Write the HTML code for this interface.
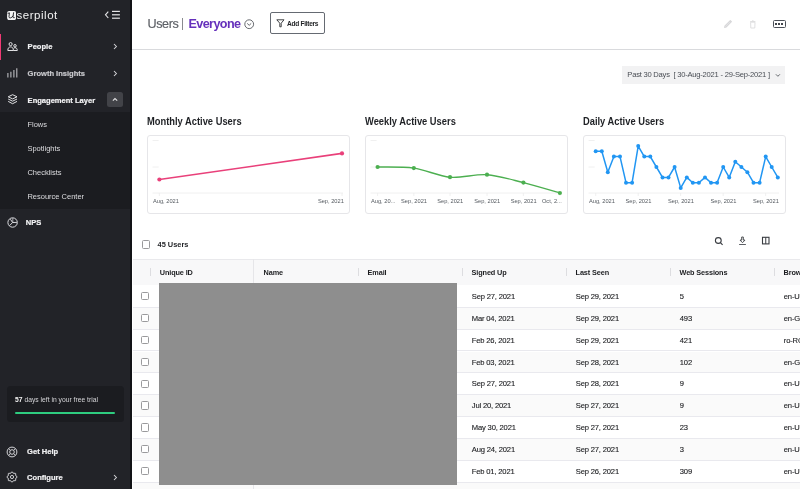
<!DOCTYPE html>
<html><head><meta charset="utf-8">
<style>
*{box-sizing:border-box;margin:0;padding:0}
html,body{width:800px;height:489px;overflow:hidden;background:#fff;font-family:"Liberation Sans",sans-serif;-webkit-font-smoothing:antialiased}
#root{position:absolute;left:0;top:0;width:800px;height:489px;overflow:hidden;will-change:transform;background:#fff}
.abs{position:absolute}
#side{position:absolute;left:0;top:0;width:132.2px;height:489px;background:#222328;border-right:2.2px solid #121316}
.nt{position:absolute;left:27.6px;font-size:7.55px;font-weight:bold;line-height:10px;color:#f2f2f4;white-space:nowrap;-webkit-text-stroke:0.2px currentColor}
.st{position:absolute;left:27.4px;font-size:7.5px;line-height:10px;color:#dcdcdf;white-space:nowrap}
.card{position:absolute;top:135px;width:203px;height:78.5px;border:1px solid #e6e6e9;border-radius:3px;background:#fff}
.card svg{position:absolute;left:-1px;top:-1px}
.lbl{position:absolute;top:60.8px;font-size:5.7px;line-height:8px;color:#555a60;white-space:nowrap}
.lbl.c{width:60px;text-align:center}
.ct{position:absolute;top:116.3px;font-size:10.1px;font-weight:bold;line-height:12px;transform:scaleX(0.925);transform-origin:0 0;color:#1e2024;white-space:nowrap}
.row{position:absolute;left:133px;width:667px;height:21.8px;border-bottom:1px solid #e9e9ee}
.cb{position:absolute;top:6.3px;width:8.2px;height:8.2px;border:1px solid #9a9a9c;border-radius:1.5px;background:#fff}
.cell{position:absolute;top:6.2px;font-size:7.6px;line-height:10px;color:#1c1d20;letter-spacing:-0.17px;-webkit-text-stroke:0.12px currentColor;white-space:nowrap}
.th{position:absolute;top:267.8px;font-size:7.3px;font-weight:bold;line-height:10px;color:#1c1d20;letter-spacing:-0.12px;white-space:nowrap}
.sep{position:absolute;top:268px;width:1px;height:8px;background:#dddde0}
</style></head>
<body>
<div id="root">
<div id="side">
  <svg class="abs" style="left:7px;top:10.8px" width="9.2" height="9.2" viewBox="0 0 9.2 9.2"><rect x="0.1" y="0.1" width="9" height="9" rx="2" fill="#f4f4f4"/><path d="M1,2.4 L2.4,1.8 L2,5.8 Q1.9,7.1 3.4,6.9 Q5,6.6 6.2,4.9 M6.6,1.7 L5.9,6 Q5.8,7 7.3,6.7" fill="none" stroke="#222328" stroke-width="0.95" stroke-linecap="round" stroke-linejoin="round"/></svg>
  <div class="abs" style="left:16.4px;top:7.5px;font-size:11.5px;line-height:14px;color:#f4f4f4;letter-spacing:0.55px">serpilot</div>
  <svg class="abs" style="left:104px;top:10px" width="17" height="10" viewBox="0 0 17 10"><path d="M4.3,1.6 L1.5,4.8 L4.3,8" fill="none" stroke="#e6e6e8" stroke-width="1.1"/><g stroke="#e6e6e8" stroke-width="1.2"><line x1="8" y1="1.4" x2="15.9" y2="1.4"/><line x1="8" y1="4.8" x2="15.9" y2="4.8"/><line x1="8" y1="8.2" x2="15.9" y2="8.2"/></g></svg>

  <div class="abs" style="left:0;top:33.5px;width:1.1px;height:26px;background:#f03a74"></div>
  <svg class="abs" style="left:6.5px;top:41.5px" width="11" height="10" viewBox="0 0 11 10"><g fill="none" stroke="#ececee" stroke-width="0.95" stroke-linejoin="round"><circle cx="3.6" cy="2.1" r="1.55"/><path d="M0.8,8.5 C0.8,6 2,4.9 3.6,4.9 C5.2,4.9 6.4,6 6.4,8.5 Z"/><circle cx="8" cy="3.8" r="1.25"/><path d="M6.4,8.5 L10.3,8.5 C10.3,6.6 9.4,5.7 8,5.7 C7.4,5.7 7,5.9 6.7,6.2"/></g></svg>
  <div class="nt" style="top:42px">People</div>
  <svg class="abs" style="left:113px;top:43.2px" width="5" height="7" viewBox="0 0 5 7"><path d="M1,1 L3.4,3.5 L1,6" fill="none" stroke="#d6d6d9" stroke-width="1.05"/></svg>

  <svg class="abs" style="left:7px;top:68px" width="11" height="10" viewBox="0 0 11 10"><g stroke="#bdbdc1" stroke-width="1.1"><line x1="0.9" y1="5" x2="0.9" y2="9.6"/><line x1="3.9" y1="3.8" x2="3.9" y2="9.6"/><line x1="6.9" y1="2" x2="6.9" y2="9.6"/><line x1="9.8" y1="0.2" x2="9.8" y2="9.6"/></g></svg>
  <div class="nt" style="top:68.5px;color:#c9c9cd">Growth Insights</div>
  <svg class="abs" style="left:113px;top:69.5px" width="5" height="7" viewBox="0 0 5 7"><path d="M1,1 L3.4,3.5 L1,6" fill="none" stroke="#d6d6d9" stroke-width="1.05"/></svg>

  <svg class="abs" style="left:7px;top:94px" width="11" height="12" viewBox="0 0 11 12"><g fill="none" stroke="#ececee" stroke-width="0.95" stroke-linejoin="round"><path d="M5.6,0.7 L10,2.8 L5.6,4.9 L1.2,2.8 Z"/><path d="M1.2,5 L5.6,7.2 L10,5"/><path d="M1.2,7.4 L5.6,9.7 L10,7.4"/></g></svg>
  <div class="nt" style="top:95.5px">Engagement Layer</div>
  <div class="abs" style="left:106.9px;top:91.6px;width:15.7px;height:15.3px;background:#424348;border-radius:2.5px"></div>
  <svg class="abs" style="left:112px;top:96px" width="7" height="6" viewBox="0 0 7 6"><path d="M0.9,4.6 L3,2.6 L5.2,4.6" fill="none" stroke="#e0e0e2" stroke-width="1.2"/></svg>

  <div class="abs" style="left:0;top:112.4px;width:130px;height:96.2px;background:#1b1c20"></div>
  <div class="st" style="top:120.2px">Flows</div>
  <div class="st" style="top:143.7px">Spotlights</div>
  <div class="st" style="top:167.7px">Checklists</div>
  <div class="st" style="top:191.7px">Resource Center</div>

  <svg class="abs" style="left:7px;top:217.4px" width="11" height="11" viewBox="0 0 11 11"><g fill="none" stroke="#e4e4e8" stroke-width="0.95"><circle cx="5.6" cy="5.5" r="4.7"/><path d="M3.4,2.2 L5.6,5.5 L9.9,5.4 M5.6,5.5 L2.6,8.6"/><path d="M5.8,1 L5.8,5.3" stroke-width="0.7"/></g></svg>
  <div class="nt" style="top:218px;left:25.8px">NPS</div>

  <div class="abs" style="left:6.7px;top:385.6px;width:117px;height:36.3px;background:#1b1c20;border-radius:3.5px"></div>
  <div class="abs" style="left:15px;top:395.4px;font-size:6.75px;line-height:9px;color:#d4d4d7;white-space:nowrap"><b style="color:#f4f4f4">57</b> days left in your free trial</div>
  <div class="abs" style="left:15px;top:411.9px;width:100.4px;height:2.2px;background:#2ecc7f;border-radius:1px"></div>

  <svg class="abs" style="left:6px;top:445.5px" width="12" height="12" viewBox="0 0 12 12"><g fill="none" stroke="#dcdce0" stroke-width="0.95"><circle cx="6" cy="6" r="4.9"/><circle cx="6" cy="6" r="2.3"/><path d="M2.6,2.6 L4.3,4.3 M9.4,2.6 L7.7,4.3 M2.6,9.4 L4.3,7.7 M9.4,9.4 L7.7,7.7" stroke-width="0.8"/></g></svg>
  <div class="nt" style="top:446.5px;left:27.1px">Get Help</div>

  <svg class="abs" style="left:6px;top:471.3px" width="12" height="12" viewBox="0 0 12 12"><g fill="none" stroke="#dcdce0" stroke-width="0.9" stroke-linejoin="round"><path d="M5.51,1.02 L6.49,1.02 L7.16,2.17 L7.89,2.47 L9.17,2.13 L9.87,2.83 L9.53,4.11 L9.83,4.84 L10.98,5.51 L10.98,6.49 L9.83,7.16 L9.53,7.89 L9.87,9.17 L9.17,9.87 L7.89,9.53 L7.16,9.83 L6.49,10.98 L5.51,10.98 L4.84,9.83 L4.11,9.53 L2.83,9.87 L2.13,9.17 L2.47,7.89 L2.17,7.16 L1.02,6.49 L1.02,5.51 L2.17,4.84 L2.47,4.11 L2.13,2.83 L2.83,2.13 L4.11,2.47 L4.84,2.17 Z"/><circle cx="6" cy="6" r="1.6"/></g></svg>
  <div class="nt" style="top:472.5px;left:27.1px">Configure</div>
  <svg class="abs" style="left:113px;top:474px" width="5" height="7" viewBox="0 0 5 7"><path d="M1,1 L3.4,3.5 L1,6" fill="none" stroke="#d6d6d9" stroke-width="1.05"/></svg>
</div>

<!-- header -->
<div class="abs" style="left:147.5px;top:16.3px;font-size:12.6px;line-height:16px;color:#5d6066;letter-spacing:-0.42px;white-space:nowrap;-webkit-text-stroke:0.15px currentColor">Users</div>
<div class="abs" style="left:182.2px;top:18.3px;width:1.3px;height:12px;background:#898b8f"></div>
<div class="abs" style="left:188.5px;top:16.3px;font-size:12.6px;line-height:16px;color:#6530bb;font-weight:bold;letter-spacing:-0.6px;white-space:nowrap">Everyone</div>
<svg class="abs" style="left:243.5px;top:19px" width="11" height="11" viewBox="0 0 11 11"><circle cx="5.2" cy="5.2" r="4.4" fill="none" stroke="#55585d" stroke-width="0.9"/><path d="M3.2,4.4 L5.2,6.3 L7.2,4.4" fill="none" stroke="#55585d" stroke-width="0.9"/></svg>

<div class="abs" style="left:270px;top:12px;width:54.5px;height:22px;border:1px solid #656a72;border-radius:2px"></div>
<svg class="abs" style="left:275.5px;top:19px" width="9" height="9" viewBox="0 0 9 9"><path d="M0.8,0.8 L8,0.8 L5.2,4.2 L5.2,7.8 L3.8,7.8 L3.8,4.2 Z" fill="none" stroke="#2a2c30" stroke-width="0.9" stroke-linejoin="round"/></svg>
<div class="abs" style="left:287px;top:19.5px;font-size:6.6px;line-height:8px;font-weight:bold;color:#1f2124;letter-spacing:-0.29px;white-space:nowrap">Add Filters</div>

<svg class="abs" style="left:723px;top:19px" width="10" height="10" viewBox="0 0 10 10"><path d="M1.6,8.4 L2,6.9 L7.3,1.6 L8.4,2.7 L3.1,8 Z" fill="#ececee" stroke="#d6d6d8" stroke-width="1.1" stroke-linejoin="round"/></svg>
<svg class="abs" style="left:749px;top:19.5px" width="8" height="9" viewBox="0 0 8 9"><path d="M1.6,2.2 L6,2.2 L5.8,8 L1.8,8 Z M1.2,1.5 L6.4,1.5 M3,0.8 L4.6,0.8" fill="none" stroke="#dcdcde" stroke-width="0.9"/></svg>
<div class="abs" style="left:772.8px;top:20px;width:12.8px;height:8px;border:1.1px solid #4b5058;border-radius:1.5px"></div>
<div class="abs" style="left:775px;top:23px;width:2px;height:2px;background:#41454b"></div>
<div class="abs" style="left:778px;top:23px;width:2px;height:2px;background:#41454b"></div>
<div class="abs" style="left:781px;top:23px;width:2px;height:2px;background:#41454b"></div>

<div class="abs" style="left:132px;top:49px;width:668px;height:1px;background:#d9dadd"></div>

<div class="abs" style="left:622.2px;top:65.8px;width:163.3px;height:17.8px;background:#f2f2f3"></div>
<div class="abs" style="left:627.3px;top:70px;font-size:7.6px;line-height:9px;color:#4a4e55;letter-spacing:-0.23px;white-space:nowrap">Past 30 Days &nbsp;[ 30-Aug-2021 - 29-Sep-2021 ]</div>
<svg class="abs" style="left:775.3px;top:73.3px" width="6" height="5" viewBox="0 0 6 5"><path d="M0.9,1.3 L2.9,3.3 L4.9,1.3" fill="none" stroke="#55585d" stroke-width="0.9"/></svg>

<div class="ct" style="left:147.2px">Monthly Active Users</div>
<div class="ct" style="left:365.2px">Weekly Active Users</div>
<div class="ct" style="left:583.2px">Daily Active Users</div>
<div class="card" style="left:147px"><svg width="203" height="78" viewBox="0 0 203 78"><g stroke="#ececec" stroke-width="0.8"><line x1="5.6" y1="5.5" x2="11.6" y2="5.5"/><line x1="5.6" y1="32" x2="11.6" y2="32"/><line x1="5.6" y1="58" x2="196" y2="58"/><line x1="12.4" y1="58" x2="12.4" y2="61"/><line x1="195" y1="58" x2="195" y2="61"/></g><path d="M12.4,44.5 L195.0,18.4" fill="none" stroke="#e9407a" stroke-width="1.6" stroke-linejoin="round"/><g fill="#e9407a"><circle cx="12.4" cy="44.5" r="2.1"/><circle cx="195.0" cy="18.4" r="2.1"/></g></svg><div class="lbl" style="left:5px">Aug, 2021</div><div class="lbl" style="right:5.199999999999989px">Sep, 2021</div></div><div class="card" style="left:365px"><svg width="203" height="78" viewBox="0 0 203 78"><g stroke="#ececec" stroke-width="0.8"><line x1="5.6" y1="5.5" x2="11.6" y2="5.5"/><line x1="5.6" y1="32" x2="11.6" y2="32"/><line x1="5.6" y1="58" x2="196" y2="58"/><line x1="12.6" y1="58" x2="12.6" y2="61"/><line x1="48.8" y1="58" x2="48.8" y2="61"/><line x1="85" y1="58" x2="85" y2="61"/><line x1="122" y1="58" x2="122" y2="61"/><line x1="158.4" y1="58" x2="158.4" y2="61"/><line x1="194.9" y1="58" x2="194.9" y2="61"/></g><path d="M12.6,32.0 C18.4,32.2 37.2,31.5 48.8,33.1 C60.4,34.7 73.3,41.1 85.0,42.2 C96.7,43.3 110.3,38.8 122.0,39.7 C133.7,40.6 146.7,44.7 158.4,47.6 C170.1,50.5 189.1,56.3 194.9,58.0" fill="none" stroke="#4caf50" stroke-width="1.4" stroke-linejoin="round"/><g fill="#4caf50"><circle cx="12.6" cy="32.0" r="2.1"/><circle cx="48.8" cy="33.1" r="2.1"/><circle cx="85.0" cy="42.2" r="2.1"/><circle cx="122.0" cy="39.7" r="2.1"/><circle cx="158.4" cy="47.6" r="2.1"/><circle cx="194.9" cy="58.0" r="2.1"/></g></svg><div class="lbl" style="left:5px">Aug, 20...</div><div class="lbl c" style="left:18.0px">Sep, 2021</div><div class="lbl c" style="left:54.2px">Sep, 2021</div><div class="lbl c" style="left:91.2px">Sep, 2021</div><div class="lbl c" style="left:127.6px">Sep, 2021</div><div class="lbl" style="right:5.199999999999989px">Oct, 2...</div></div><div class="card" style="left:583px"><svg width="203" height="78" viewBox="0 0 203 78"><g stroke="#ececec" stroke-width="0.8"><line x1="5.6" y1="5.5" x2="11.6" y2="5.5"/><line x1="5.6" y1="32" x2="11.6" y2="32"/><line x1="5.6" y1="58" x2="196" y2="58"/><line x1="12.7" y1="58" x2="12.7" y2="61"/><line x1="55.19" y1="58" x2="55.19" y2="61"/><line x1="97.68" y1="58" x2="97.68" y2="61"/><line x1="140.17" y1="58" x2="140.17" y2="61"/><line x1="182.66" y1="58" x2="182.66" y2="61"/></g><path d="M12.7,16.3 L18.8,16.3 L24.8,37.2 L30.9,21.6 L37.0,21.6 L43.0,47.7 L49.1,47.7 L55.2,11.1 L61.3,21.6 L67.3,21.6 L73.4,32.0 L79.5,42.4 L85.5,42.4 L91.6,32.0 L97.7,52.9 L103.8,42.4 L109.8,47.7 L115.9,47.7 L122.0,42.4 L128.0,47.7 L134.1,47.7 L140.2,32.0 L146.2,42.4 L152.3,26.8 L158.4,32.0 L164.4,37.2 L170.5,47.7 L176.6,47.7 L182.7,21.6 L188.7,32.0 L194.8,42.4" fill="none" stroke="#2196f3" stroke-width="1.5" stroke-linejoin="round"/><g fill="#2196f3"><circle cx="12.7" cy="16.3" r="2.0"/><circle cx="18.8" cy="16.3" r="2.0"/><circle cx="24.8" cy="37.2" r="2.0"/><circle cx="30.9" cy="21.6" r="2.0"/><circle cx="37.0" cy="21.6" r="2.0"/><circle cx="43.0" cy="47.7" r="2.0"/><circle cx="49.1" cy="47.7" r="2.0"/><circle cx="55.2" cy="11.1" r="2.0"/><circle cx="61.3" cy="21.6" r="2.0"/><circle cx="67.3" cy="21.6" r="2.0"/><circle cx="73.4" cy="32.0" r="2.0"/><circle cx="79.5" cy="42.4" r="2.0"/><circle cx="85.5" cy="42.4" r="2.0"/><circle cx="91.6" cy="32.0" r="2.0"/><circle cx="97.7" cy="52.9" r="2.0"/><circle cx="103.8" cy="42.4" r="2.0"/><circle cx="109.8" cy="47.7" r="2.0"/><circle cx="115.9" cy="47.7" r="2.0"/><circle cx="122.0" cy="42.4" r="2.0"/><circle cx="128.0" cy="47.7" r="2.0"/><circle cx="134.1" cy="47.7" r="2.0"/><circle cx="140.2" cy="32.0" r="2.0"/><circle cx="146.2" cy="42.4" r="2.0"/><circle cx="152.3" cy="26.8" r="2.0"/><circle cx="158.4" cy="32.0" r="2.0"/><circle cx="164.4" cy="37.2" r="2.0"/><circle cx="170.5" cy="47.7" r="2.0"/><circle cx="176.6" cy="47.7" r="2.0"/><circle cx="182.7" cy="21.6" r="2.0"/><circle cx="188.7" cy="32.0" r="2.0"/><circle cx="194.8" cy="42.4" r="2.0"/></g></svg><div class="lbl" style="left:5px">Aug, 2021</div><div class="lbl c" style="left:24.4px">Sep, 2021</div><div class="lbl c" style="left:66.9px">Sep, 2021</div><div class="lbl c" style="left:109.4px">Sep, 2021</div><div class="lbl c" style="left:151.9px">Sep, 2021</div></div>

<div class="cb" style="left:141.8px;top:240px;width:8.3px;height:8.5px"></div>
<div class="abs" style="left:157.6px;top:239.5px;font-size:7.4px;line-height:9px;font-weight:bold;color:#1f2124;white-space:nowrap">45 Users</div>

<svg class="abs" style="left:714px;top:235.6px" width="10" height="10" viewBox="0 0 10 10"><circle cx="4.3" cy="4.5" r="2.9" fill="none" stroke="#3a3d42" stroke-width="1.1"/><path d="M6.4,6.6 L8.6,8.8" stroke="#3a3d42" stroke-width="1.2"/></svg>
<svg class="abs" style="left:738px;top:235px" width="10" height="11" viewBox="0 0 10 11"><path d="M3.7,2 L5.3,2 L5.3,5.1 L7,5.1 L4.5,7.7 L2,5.1 L3.7,5.1 Z" fill="none" stroke="#3a3d42" stroke-width="0.9" stroke-linejoin="round"/><line x1="1.1" y1="9.5" x2="7.9" y2="9.5" stroke="#4a4d52" stroke-width="0.9"/></svg>
<svg class="abs" style="left:761px;top:236px" width="10" height="10" viewBox="0 0 10 10"><rect x="1.5" y="1.3" width="6.5" height="6.6" fill="none" stroke="#3a3d42" stroke-width="1.1"/><line x1="4.75" y1="1.3" x2="4.75" y2="7.9" stroke="#3a3d42" stroke-width="1"/></svg>

<!-- table -->
<div class="abs" style="left:133px;top:259px;width:667px;height:26px;background:#f8f8f9;border-top:1px solid #e9e9ec;border-bottom:none"></div>
<div class="sep" style="left:150px"></div>
<div class="sep" style="left:358px"></div>
<div class="sep" style="left:462px"></div>
<div class="sep" style="left:566px"></div>
<div class="sep" style="left:670px"></div>
<div class="sep" style="left:774px"></div>
<div class="th" style="left:159.8px">Unique ID</div>
<div class="th" style="left:263.6px">Name</div>
<div class="th" style="left:367.6px">Email</div>
<div class="th" style="left:471.6px">Signed Up</div>
<div class="th" style="left:575.6px">Last Seen</div>
<div class="th" style="left:679.5px">Web Sessions</div>
<div class="th" style="left:783.6px">Browser</div>
<div class="row" style="top:285.9px;background:#fff"><div class="cb" style="left:8px"></div><div class="cell" style="left:338.8px">Sep 27, 2021</div><div class="cell" style="left:442.8px">Sep 29, 2021</div><div class="cell" style="left:546.8px">5</div><div class="cell" style="left:650.8px">en-US</div></div><div class="row" style="top:307.8px;background:#fafafa"><div class="cb" style="left:8px"></div><div class="cell" style="left:338.8px">Mar 04, 2021</div><div class="cell" style="left:442.8px">Sep 29, 2021</div><div class="cell" style="left:546.8px">493</div><div class="cell" style="left:650.8px">en-GB</div></div><div class="row" style="top:329.6px;background:#fff"><div class="cb" style="left:8px"></div><div class="cell" style="left:338.8px">Feb 26, 2021</div><div class="cell" style="left:442.8px">Sep 29, 2021</div><div class="cell" style="left:546.8px">421</div><div class="cell" style="left:650.8px">ro-RO</div></div><div class="row" style="top:351.5px;background:#fafafa"><div class="cb" style="left:8px"></div><div class="cell" style="left:338.8px">Feb 03, 2021</div><div class="cell" style="left:442.8px">Sep 28, 2021</div><div class="cell" style="left:546.8px">102</div><div class="cell" style="left:650.8px">en-GB</div></div><div class="row" style="top:373.3px;background:#fff"><div class="cb" style="left:8px"></div><div class="cell" style="left:338.8px">Sep 27, 2021</div><div class="cell" style="left:442.8px">Sep 28, 2021</div><div class="cell" style="left:546.8px">9</div><div class="cell" style="left:650.8px">en-US</div></div><div class="row" style="top:395.2px;background:#fafafa"><div class="cb" style="left:8px"></div><div class="cell" style="left:338.8px">Jul 20, 2021</div><div class="cell" style="left:442.8px">Sep 27, 2021</div><div class="cell" style="left:546.8px">9</div><div class="cell" style="left:650.8px">en-US</div></div><div class="row" style="top:417.1px;background:#fff"><div class="cb" style="left:8px"></div><div class="cell" style="left:338.8px">May 30, 2021</div><div class="cell" style="left:442.8px">Sep 27, 2021</div><div class="cell" style="left:546.8px">23</div><div class="cell" style="left:650.8px">en-US</div></div><div class="row" style="top:438.9px;background:#fafafa"><div class="cb" style="left:8px"></div><div class="cell" style="left:338.8px">Aug 24, 2021</div><div class="cell" style="left:442.8px">Sep 27, 2021</div><div class="cell" style="left:546.8px">3</div><div class="cell" style="left:650.8px">en-US</div></div><div class="row" style="top:460.8px;background:#fff"><div class="cb" style="left:8px"></div><div class="cell" style="left:338.8px">Feb 01, 2021</div><div class="cell" style="left:442.8px">Sep 26, 2021</div><div class="cell" style="left:546.8px">309</div><div class="cell" style="left:650.8px">en-US</div></div><div class="row" style="top:482.6px;background:#fafafa"></div>
<div class="abs" style="left:253.2px;top:259px;width:1px;height:230px;background:#e6e6e9"></div>
<div class="abs" style="left:158.8px;top:282.8px;width:298.4px;height:202px;background:#8e8e8e"></div>
</div>
</body></html>
